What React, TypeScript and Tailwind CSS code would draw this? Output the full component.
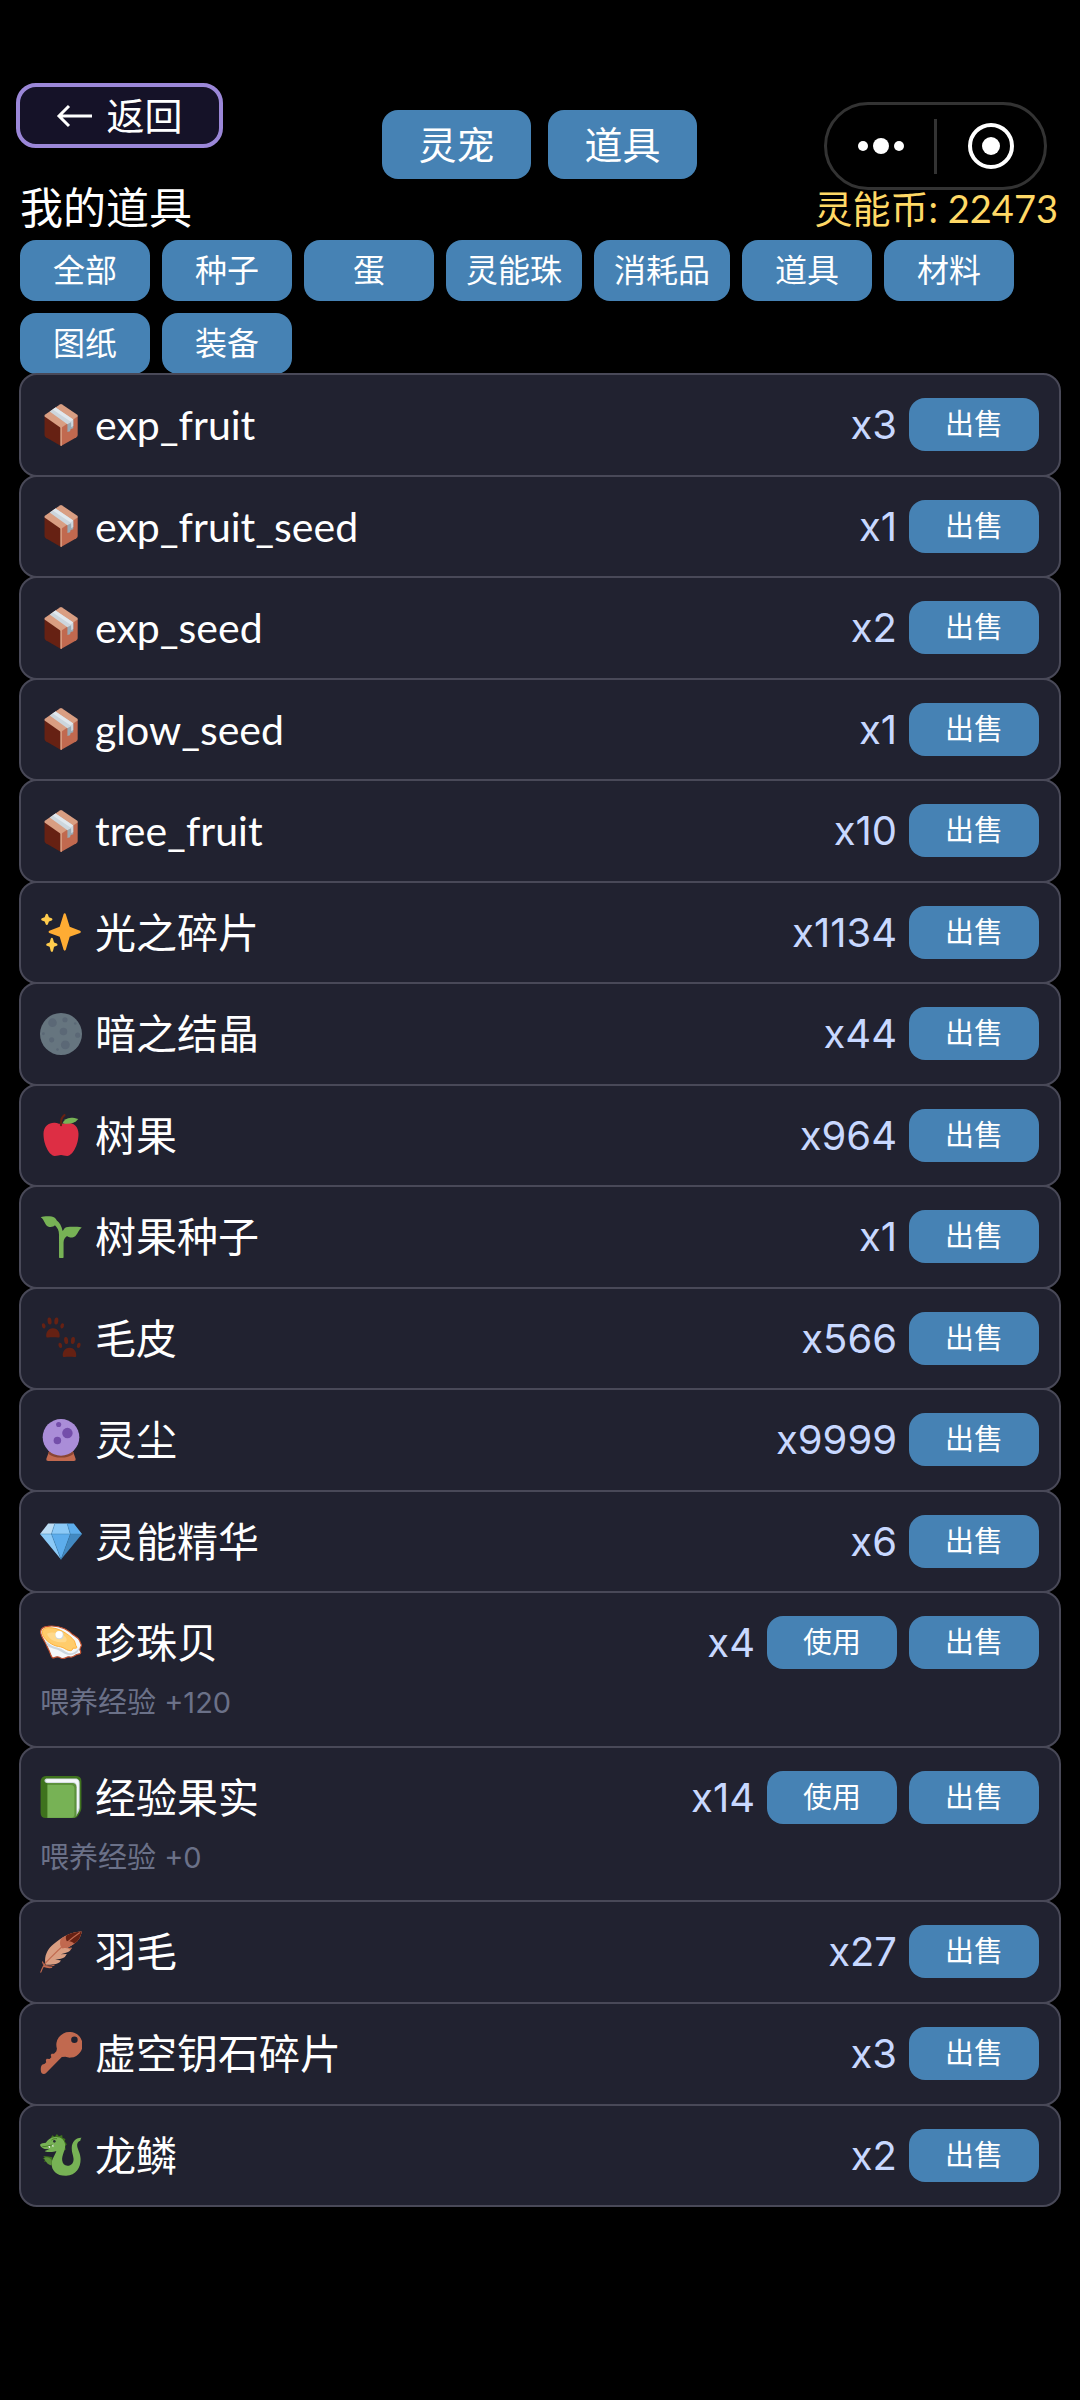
import type { ReactNode } from "react";

function Emoji({ children }: { children: ReactNode }) {
  return (
    <svg viewBox="0 0 36 36" className="size-[42px] shrink-0" aria-hidden="true">
      {children}
    </svg>
  );
}

const box = (
  <Emoji>
    <path fill="#662113" d="M3.9 10.3 18 20v16L5 28.600q-1.100-.7-1.100-2z" />
    <path fill="#C1694F" d="M32.300 10.300 18 20v16l13.200-7.400q1.100-.7 1.100-2z" />
    <path fill="#D99E82" d="M17 .4q1-.6 2 0l13.300 9.100v1.200L18 20.600 3.900 10.700V9.500z" />
    <path fill="#D99E82" d="M17.400 19.800h1.400v15.800l-.8.4-.6-.4z" />
    <path fill="#99AAB5" d="m23.500 17.200 5-3.400v7l-2.200.7-.6 1.900-2.200.6z" />
    <path fill="#CCD6DD" d="m8.300 6.500 5-3.400 15.200 10.200v5.600l-1.700 1-.2-4.300-3.100 1.700z" />
    <path fill="#E1E8ED" d="m10.900 4.700 2.400-1.600 15.200 10.200-2.300 1.700z" />
  </Emoji>
);

const sparkles = (
  <Emoji>
    <path
      fill="#FFAC33"
      d="M34.347 16.893l-8.899-3.294-3.323-10.891c-.128-.42-.517-.708-.956-.708-.439 0-.828.288-.956.708l-3.322 10.891-8.9 3.294c-.393.146-.653.519-.653.938 0 .418.26.793.653.938l8.895 3.293 3.324 11.223c.126.424.516.715.959.715.442 0 .833-.291.959-.716l3.324-11.223 8.896-3.293c.391-.144.652-.518.652-.937 0-.418-.261-.792-.653-.938z"
    />
    <path
      fill="#FFCC4D"
      d="M14.347 27.894l-2.314-.856-.9-3.3c-.118-.436-.513-.738-.964-.738-.451 0-.846.302-.965.737l-.9 3.3-2.313.856c-.393.146-.653.52-.653.938 0 .418.26.793.653.938l2.301.853.907 3.622c.112.444.511.756.97.756.459 0 .858-.312.97-.757l.907-3.622 2.301-.853c.393-.144.653-.519.653-.937 0-.418-.26-.793-.653-.937zM10.009 6.231l-2.364-.875-.876-2.365c-.145-.393-.519-.653-.938-.653-.418 0-.792.26-.938.653l-.875 2.365-2.365.875c-.393.146-.653.52-.653.938 0 .418.26.793.653.938l2.365.875.875 2.365c.146.393.52.653.938.653.418 0 .792-.26.938-.653l.875-2.365 2.365-.875c.393-.146.653-.52.653-.938 0-.418-.26-.792-.653-.938z"
    />
  </Emoji>
);

const moon = (
  <Emoji>
    <circle cx="18" cy="18" r="18" fill="#66757F" />
    <g fill="#5B6876">
      <circle cx="10.700" cy="8.300" r="3.700" />
      <circle cx="21.400" cy="5.800" r="2.200" />
      <circle cx="20.100" cy="15.900" r="3.200" />
      <circle cx="32.300" cy="19" r="2.200" />
      <circle cx="10" cy="23" r="2.200" />
      <circle cx="21.700" cy="27.300" r="3.800" />
      <circle cx="2.900" cy="17.800" r="1.200" />
      <circle cx="30.200" cy="9" r="1.100" />
      <circle cx="15" cy="31.300" r="1.100" />
    </g>
  </Emoji>
);

const apple = (
  <Emoji>
    <path
      fill="#DD2E44"
      d="M24 7.500c-3 0-3 1-6 1s-3-1-6-1c-4.500 0-9 3-9 9.500C3 27 8.500 36 12.500 36c3 0 3.500-.8 5.500-.8s2.500.8 5.500.8C27.500 36 33 27 33 17c0-6.500-4.500-9.500-9-9.500z"
    />
    <path fill="none" stroke="#662113" strokeWidth="1.800" strokeLinecap="round" d="M18 9.500c-.3-3.500.8-7 3-8.600" />
    <path fill="#77B255" d="M19.300 7.900C21 3.600 25.500 1.800 32.800 4.300 29.500 8.300 24.500 9 19.300 7.900z" />
  </Emoji>
);

const seedling = (
  <Emoji>
    <path
      fill="#77B255"
      d="M.6 1C3 .2 6.500-.2 10 .4c2 .3 3.600 1.700 4.400 3.400 2.300 1.600 4.100 4.600 5 9 .5-.3 1-.9 1.200-1.600.7-1.400 2.700-1.900 5-2 3.500 0 7-.1 10.200.6-2.500 1.700-3.200 5.100-5.600 7.500-2.300 1.700-5.100 1.500-7-.1-1.900 1.400-3 3-3 5.500v12.900c0 .7-3.900.7-3.900 0V16c0-3.300-1.300-6-3.500-8-1.100 1.300-3.700 1.900-6 1C4 7.500 4 3.300.6 1z"
    />
  </Emoji>
);

function Paw() {
  return (
    <>
      <path d="M5.400 16.900c-.6-3 1.300-7.300 5.700-7.300s6.300 4.300 5.700 7.300c-.3 1.200-2.700.5-5.700.5s-5.400.7-5.700-.5z" />
      <ellipse cx="3.200" cy="7.600" rx="1.500" ry="2.300" transform="rotate(-18 3.200 7.600)" />
      <ellipse cx="8.200" cy="3.500" rx="1.700" ry="3" transform="rotate(-8 8.200 3.500)" />
      <ellipse cx="14" cy="3.500" rx="1.700" ry="3" transform="rotate(8 14 3.500)" />
      <ellipse cx="19" cy="7.600" rx="1.500" ry="2.300" transform="rotate(18 19 7.600)" />
    </>
  );
}

const paws = (
  <Emoji>
    <g fill="#662113">
      <Paw />
      <g transform="translate(14.200 16.700)">
        <Paw />
      </g>
    </g>
  </Emoji>
);

const crystalBall = (
  <Emoji>
    <path fill="#C1694F" d="M8 27h20l2.600 7.200q.3 1.800-1.500 1.800H6.900q-1.800 0-1.500-1.800z" />
    <path fill="#8A4633" d="M7.700 28h20.600l.7 1.700C26 32 22 33 18 33S10 32 7 29.700z" />
    <circle cx="18" cy="15.700" r="15.700" fill="#AA8DD8" />
    <g fill="#744EAA">
      <circle cx="16" cy="4.700" r="2.200" />
      <circle cx="23.500" cy="12.100" r="4.500" />
      <circle cx="14.900" cy="18.500" r="3.200" />
    </g>
  </Emoji>
);

const gem = (
  <Emoji>
    <path fill="#BDDDF4" d="M13 3H7L0 12h9.800z" />
    <path fill="#8CCAF7" d="M12.700 3h10.600l2.600 9H9.800zM0 12l18 21.800L9.900 12z" />
    <path fill="#5DADEC" d="M23 3h6l7 9H25.900zM9.800 12H26l-8 21.800z" />
    <path fill="#4289C1" d="M36 12 18 33.800 26 12z" />
    <path fill="none" stroke="#3B7FB0" strokeWidth=".4" d="M12.700 3 9.800 12 18 33.800 26 12l-2.700-9M0 12h36" />
  </Emoji>
);

const oyster = (
  <Emoji>
    <path
      fill="#F5F8FA"
      stroke="#C1502E"
      strokeWidth="1"
      strokeLinejoin="round"
      d="M.6 8c.5-3 3-4 6-4.300C12 3 17 4 21 5.800c3 1.400 5 3 7 5 2.500 1.700 5 2.800 6 5.200.4 1.700 1.700 3 1.400 4.300-.5 1.400-1.700 2.500-1 4 .6 1.300.9 2.700-.4 3-1.700.4-3 .4-4 1.400-1.300.8-2.600 1.800-4.300 1.300-1.700-.5-3 .3-4.300 1-1.700.5-3.500.2-4.700-.7-1.700-1-3.200-.3-5 .5-1.700.1-2-1.300-2.700-3.300C8 24 6.300 22 5.400 19.300 4 16 .2 12 .6 8z"
    />
    <path fill="#CCD6DD" d="M4 15.500c5 5.500 10 6 14 7.500 4 2 6 5.200 10.500 3.300 2-.8 4-3 5.500-4.300-1 2-1.500 4.500-4.500 5.500-5 2-9-.5-12-2.500-4-2.500-9-2-11.500-5z" />
    <path
      fill="#FFCC6B"
      stroke="#FFAC33"
      strokeWidth=".8"
      d="M2 8.300c.3-2.500 2.500-3.500 5-3.500 5 0 9 1.200 13 3.500 3.500 2 7.500 5 9.500 7.900 1 2 .6 3.300 2 5.300.4 1.400-1.800 1-3.300.9-.2 1.200-.8 2.200-2.200 2.200-2.500-.1-4-1.500-6.300-2.600-2.500-1.200-5.200-.8-8.200-2.300C7 17.500 1.700 13 2 8.300z"
    />
    <path fill="#FFE8B6" d="M6 10c4-2 12-1 16 3 1.500 1.700 1 4-1 4.300C14 17.500 8 16 6 10z" opacity=".45" />
    <circle cx="16.700" cy="11.300" r="3.500" fill="#CCD6DD" />
    <circle cx="16.400" cy="10.800" r="3.100" fill="#FFF" />
  </Emoji>
);

const book = (
  <Emoji>
    <path fill="#3E721D" d="M5.500 0h25C34 0 35.500 1.800 35.500 4.500v22.700c0 2.500-1.200 4-2.500 6.300-1 1.700-2 2.500-4 2.500H5C2 36 .5 34.500.5 31.500V5C.5 2 2.500 0 5.500 0z" />
    <path fill="#5C913B" d="M6.500 7H28c3 0 4.500 1.500 4.500 4.300V32c-1 2.500-2 4-4 4h-22z" />
    <path fill="#CCD6DD" d="M6 2.200h24c2.700 0 4 1.400 4 3.700v21.500c0 3-1.800 4.600-3 6.700l-1-2V9.500C30 7.500 29 6.300 27 6.300H7C3 6.300 3 2.200 6 2.200z" />
    <path fill="#F5F8FA" d="M6.500 2.800H30c2.300 0 3.200 1 3.200 3v21.500l-1.700 4V8.300c0-2-1-3-3-3H7C4.500 5.300 4.500 2.800 6.500 2.800z" />
    <path fill="#5C913B" d="M6.500 6h21c2.500 0 3.800 1.300 3.800 3.700v23c-.8 2.200-2 3.300-4 3.300H6.500z" />
    <path fill="#77B255" d="M6.500 7.800h20c2 0 3 1 3 3v22c0 2-1 3-3 3h-20z" />
  </Emoji>
);

const feather = (
  <Emoji>
    <path
      fill="#D99E82"
      d="M35.600.5C26 1 18.500 5.800 12 11c-5 4-7.500 8.500-7.700 14.200L4.800 29c3-.3 8 .4 12-2.200l1.200-1.600-5-.8c4-.1 6.300-.9 8.300-2.100l1.700-2.500-5.300.2c3.400-.8 6-1.500 8-3l1.600-2.600-4 .1c4.700-2.200 8.700-5 10.600-8.500.9-2 1.700-3.500 1.700-5.500z"
    />
    <path fill="#C1694F" d="M17.700 6.800C23 3.300 28 .8 35.600.5c0 2-.8 3.500-1.700 5.500-1.900 3.500-5.900 6.300-10.600 8.500l4-.1-1.300 2.100c-1.200-1.700-4-2.500-6.500-1.500-2-1.200-3-4-1.800-8.200z" />
    <path fill="#662113" d="M22.500 3.900C26 2 30.500.8 35.600.5c0 2-.8 3.500-1.700 5.500-1 2-2.700 3.700-4.500 5-1.500-2-4-2.300-6.400-2.200-.8-1.500-1.200-3-.5-4.900z" />
    <path fill="none" stroke="#C1694F" strokeWidth="1" strokeLinecap="round" d="M.7 35.300C2 31.500 3.500 28.500 6 26c6-6 14-15 28-24.500M3 28.500l-.8-2M4 29.700c3 .8 5 .6 8-.4M3.500 30.500c2.500 1.200 4.500 1 6.500.8" />
  </Emoji>
);

const keyIcon = (
  <Emoji>
    <path
      fill="#C1694F"
      fillRule="evenodd"
      d="M25 0a11 11 0 0 0-10.500 14.300l-.5 2.200-2 2.200-2-.1-.8 1.200.5 1.900-1.500 1.500-2.400-.2-.8 1 .3 2-1.200 1.300-2.300.7C.4 29.400.5 32.500.9 34.300 1.400 36 3.600 36.600 5 35.300L18.700 21.500l3-.2A11 11 0 1 0 25 0zm4.500 3.800a2.800 2.800 0 1 1 0 5.600 2.800 2.800 0 0 1 0-5.600z"
    />
  </Emoji>
);

const dragon = (
  <Emoji>
    <path fill="#3E721D" d="m9 4 1.500-3 2.200 1.400L14.500 0l1.700 2L19 .8l.3 2.400 2.500 1-.7 2 1.900 2.500-1.500 1.700.5 3-2 1-12-8z" />
    <path fill="#3E721D" d="m10.500 20-3-.8-4.800-.4 1.500 1.500-2 .6 2.200 1.200-1 1.600 2.400-.2.300 2 1.700-.8 2.700 2z" />
    <path
      fill="#77B255"
      d="M0 9.200C1 8 3 8 5 7.600c1.500-2.500 4-4.500 7.500-5 5-.7 8.500 2 9 6.400.5 5-3 9-2.500 13.500.3 3 2 4.700 4.500 4.700 3.500 0 5.700-2.700 5.200-6.500-.4-3.200-1.600-5-1.500-8.700.1-5 3.300-9 8.500-8.700-1 .6-.6 1.700-1.200 2.400-2 .8-3 2.300-2.600 4.800.4 2.700 2.800 6 2.900 11 .1 7.500-4 14-12.300 14.300-8 .2-13-4.500-12.500-11 .3-4 3.200-7 4-10.300-2 .5-3.500 1-5.500.9-2 .2-3.300.2-4.500-.8L8 13l-4-.2c-2-.7-3.700-1.800-4-3.600z"
    />
    <path fill="#5C913B" d="M3.400 20.500c2.500-1.300 5-.3 6.600 2l-.3 4.500c-3-1-5-3.500-6.300-6.500z" />
    <path fill="#F5F8FA" d="m6.800 10.800 1.600-.8.300 2.200zM9.800 9.800l1.600-.7.100 2.300z" />
    <circle cx="12.300" cy="6.300" r="1.100" fill="#292F33" />
    <path fill="none" stroke="#3E721D" strokeWidth=".7" d="M9.800 5.200c1.500-1.100 3-1.400 4.800-1.200M2 10.600c3 .7 6-1 8.800-1.200" />
  </Emoji>
);

type Item = { icon: ReactNode; name: string; count: number; usable?: boolean; note?: string };

const items: Item[] = [
  { icon: box, name: "exp_fruit", count: 3 },
  { icon: box, name: "exp_fruit_seed", count: 1 },
  { icon: box, name: "exp_seed", count: 2 },
  { icon: box, name: "glow_seed", count: 1 },
  { icon: box, name: "tree_fruit", count: 10 },
  { icon: sparkles, name: "光之碎片", count: 1134 },
  { icon: moon, name: "暗之结晶", count: 44 },
  { icon: apple, name: "树果", count: 964 },
  { icon: seedling, name: "树果种子", count: 1 },
  { icon: paws, name: "毛皮", count: 566 },
  { icon: crystalBall, name: "灵尘", count: 9999 },
  { icon: gem, name: "灵能精华", count: 6 },
  { icon: oyster, name: "珍珠贝", count: 4, usable: true, note: "喂养经验 +120" },
  { icon: book, name: "经验果实", count: 14, usable: true, note: "喂养经验 +0" },
  { icon: feather, name: "羽毛", count: 27 },
  { icon: keyIcon, name: "虚空钥石碎片", count: 3 },
  { icon: dragon, name: "龙鳞", count: 2 },
];

const filters = ["全部", "种子", "蛋", "灵能珠", "消耗品", "道具", "材料", "图纸", "装备"];

function ActionButton({ label }: { label: string }) {
  return (
    <button type="button" className="h-[53px] min-w-[130px] rounded-2xl bg-[#4682b4] px-5 text-[29px] leading-none">
      {label}
    </button>
  );
}

function ItemRow({ icon, name, count, usable, note }: Item) {
  return (
    <li className="-mt-0.5 flex-auto rounded-[18px] border-2 border-[#494958] bg-[#212230] py-[23px] pl-[19px] pr-5">
      <div className="flex items-center gap-3">
        <div className="flex min-w-0 flex-1 items-center gap-[13px]">
          {icon}
          <span className="font-['Lato','Noto_Sans_CJK_SC',sans-serif] text-[41px] leading-[53px]">{name}</span>
        </div>
        <span className="text-[40px] leading-[53px] text-[#c8d8ff]">x{count}</span>
        {usable && <ActionButton label="使用" />}
        <ActionButton label="出售" />
      </div>
      {note && <p className="mt-[15px] text-[29px] leading-[38px] text-[#6b7188]">{note}</p>}
    </li>
  );
}

export default function App() {
  return (
    <main className="min-h-screen bg-black pb-10 pt-[83px] font-['Inter','Noto_Sans_CJK_SC',sans-serif] text-white">
      <header className="grid grid-cols-[1fr_auto_1fr] items-start pl-4 pr-[33px]">
        <button
          type="button"
          className="flex h-[65px] w-[207px] items-center justify-center gap-[14px] rounded-[20px] border-4 border-[#9b87d8] bg-[#151228] text-[38px] leading-none"
        >
          <svg viewBox="0 0 36 24" className="w-9" fill="none" stroke="currentColor" strokeWidth="3" aria-hidden="true">
            <path d="M36 12H3M13 2 3 12l10 10" />
          </svg>
          返回
        </button>
        <nav className="mt-[27px] flex gap-[17px] pl-4">
          <button type="button" className="h-[69px] w-[149px] rounded-2xl bg-[#4682b4] text-[38px] leading-none">
            灵宠
          </button>
          <button type="button" className="h-[69px] w-[149px] rounded-2xl bg-[#4682b4] text-[38px] leading-none">
            道具
          </button>
        </nav>
        <div className="mt-[19px] flex h-[88px] w-[223px] items-center justify-self-end rounded-full border-3 border-[#333333]">
          <button type="button" aria-label="更多" className="flex flex-1 items-center justify-center gap-[5px]">
            <span className="size-[10px] rounded-full bg-white" />
            <span className="size-4 rounded-full bg-white" />
            <span className="size-[10px] rounded-full bg-white" />
          </button>
          <span className="h-[55px] w-[3px] bg-[#333333]" />
          <button type="button" aria-label="关闭" className="flex flex-1 justify-center">
            <span className="flex size-[46px] items-center justify-center rounded-full border-4 border-white">
              <span className="size-[18px] rounded-full bg-white" />
            </span>
          </button>
        </div>
      </header>

      <div className="mb-[14px] flex items-center justify-between pl-5 pr-[22px] leading-9">
        <h1 className="text-[43px] leading-9">我的道具</h1>
        <p className="font-['Lato','Noto_Sans_CJK_SC',sans-serif] text-[38px] leading-9 text-[#ffd966]">
          灵能币: 22473
        </p>
      </div>

      <div className="flex flex-wrap gap-3 px-5">
        {filters.map((label) => (
          <button
            key={label}
            type="button"
            className="h-[61px] min-w-[130px] rounded-2xl bg-[#4682b4] px-5 text-[32px] leading-none"
          >
            {label}
          </button>
        ))}
      </div>

      <ul className="mx-[19px] flex min-h-[1833px] flex-col pt-px">
        {items.map((item) => (
          <ItemRow key={item.name} {...item} />
        ))}
      </ul>
    </main>
  );
}
